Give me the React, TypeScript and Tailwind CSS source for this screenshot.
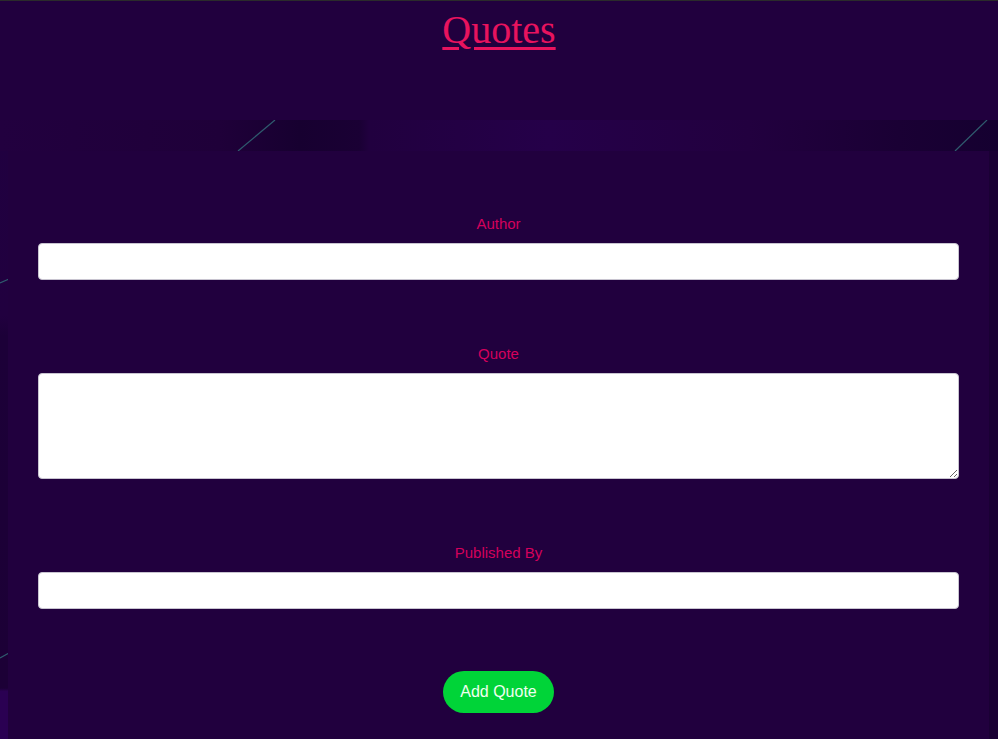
import React from "react";

function Backdrop() {
  return (
    <svg className="absolute inset-0 h-full w-full" aria-hidden="true">
      <defs>
        <linearGradient id="bgH" x1="0" y1="0" x2="1" y2="0">
          <stop offset="0" stopColor="#22003f" />
          <stop offset="0.22" stopColor="#1f0039" />
          <stop offset="0.3" stopColor="#170030" />
          <stop offset="0.36" stopColor="#1a0034" />
          <stop offset="0.37" stopColor="#21003f" />
          <stop offset="0.55" stopColor="#250049" />
          <stop offset="0.75" stopColor="#22003f" />
          <stop offset="0.9" stopColor="#1a0034" />
          <stop offset="1" stopColor="#150030" />
        </linearGradient>
        <linearGradient id="bgV" x1="0" y1="0" x2="0" y2="1">
          <stop offset="0" stopColor="#200040" />
          <stop offset="0.3" stopColor="#21003f" />
          <stop offset="0.33" stopColor="#1c0038" />
          <stop offset="0.87" stopColor="#1c0036" />
          <stop offset="0.875" stopColor="#2a0052" />
          <stop offset="1" stopColor="#2a0052" />
        </linearGradient>
      </defs>
      <rect x="0" y="0" width="100%" height="100%" fill="url(#bgV)" />
      <rect x="0" y="0" width="100%" height="31" fill="url(#bgH)" />
      <rect x="988" y="31" width="10" height="100%" fill="#1a0034" />
      <line x1="238" y1="31" x2="275" y2="0" stroke="#2f5a6e" strokeWidth="1.2" />
      <line x1="955" y1="31" x2="987" y2="0" stroke="#2f5a6e" strokeWidth="1.2" />
      <line x1="0" y1="163" x2="9" y2="159" stroke="#2f5a6e" strokeWidth="1.2" />
      <line x1="0" y1="538" x2="9" y2="533" stroke="#2f5a6e" strokeWidth="1.2" />
    </svg>
  );
}

function Field({
  label,
  multiline,
  first,
}: {
  label: string;
  multiline?: boolean;
  first?: boolean;
}) {
  return (
    <div className={first ? "" : "mt-[65px]"}>
      <label className="block text-center text-[15px] leading-[17px] text-[#d4005c] mb-[11px]">
        {label}
      </label>
      {multiline ? (
        <textarea className="block h-[106px] w-full rounded-[4px] border border-[#c8c4d0] bg-white" />
      ) : (
        <input
          type="text"
          className="block h-[37px] w-full rounded-[4px] border border-[#c8c4d0] bg-white"
        />
      )}
    </div>
  );
}

export default function App() {
  return (
    <div
      className="min-h-screen border-t border-[#2b2b2b] bg-[#21003e]"
      style={{ fontFamily: '"Liberation Sans", Arial, sans-serif' }}
    >
      <h1
        className="mt-[6px] text-center text-[40px] leading-[46px] text-[#e8135e] underline decoration-[3px] underline-offset-[4px]"
        style={{ fontFamily: '"Liberation Serif", "Times New Roman", serif' }}
      >
        Quotes
      </h1>
      <section className="relative mt-[67px] pt-[31px]">
        <Backdrop />
        <div className="relative ml-[8px] mr-[9px] bg-[#21003e] px-[30px] pt-[64px] pb-[60px]">
          <Field label="Author" first />
          <Field label="Quote" multiline />
          <Field label="Published By" />
          <div className="mt-[62px] flex justify-center">
            <button className="h-[42px] w-[111px] rounded-full bg-[#00d438] text-[16px] text-[#f0fff0]">
              Add Quote
            </button>
          </div>
        </div>
      </section>
    </div>
  );
}
